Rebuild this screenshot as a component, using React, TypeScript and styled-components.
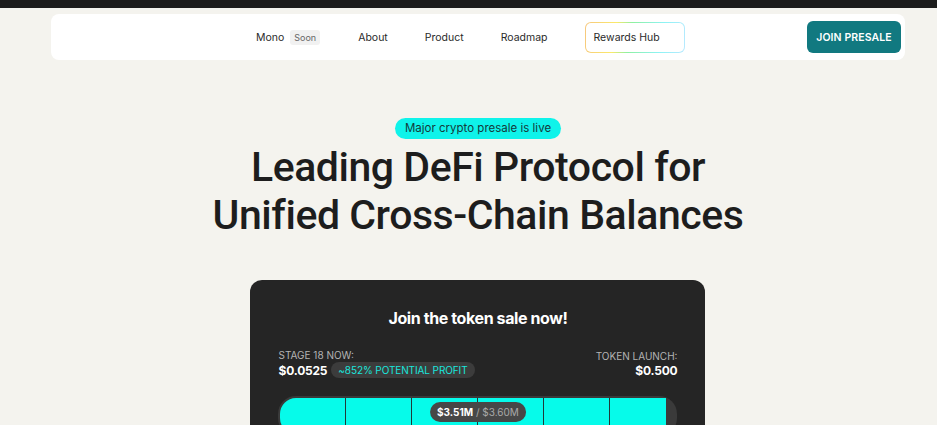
import React from "react";
import styled, { createGlobalStyle } from "styled-components";

const GlobalStyle = createGlobalStyle`
  html, body {
    margin: 0;
    padding: 0;
    background: #f4f3ee;
    font-family: Inter, "Noto Sans", sans-serif;
    color: #1b1b1b;
  }
`;

const TopStrip = styled.div`
  height: 8px;
  background: #1c1c1c;
`;

const Page = styled.div`
  display: flex;
  flex-direction: column;
  align-items: center;
  height: 417px;
  overflow: hidden;
  padding-left: 19px;

  & > * {
    flex-shrink: 0;
  }
`;

const NavCard = styled.nav`
  box-sizing: border-box;
  width: 854px;
  height: 46px;
  margin-top: 6px;
  background: #fff;
  border-radius: 8px;
  display: flex;
  align-items: center;
  padding: 0 4px 0 205px;
`;

const NavLinks = styled.ul`
  display: flex;
  align-items: center;
  list-style: none;
  margin: 0;
  padding: 0;
  flex: 1;
`;

const NavItem = styled.li<{ $gap: number }>`
  display: flex;
  align-items: center;
  gap: 6px;
  font-size: 10.5px;
  color: #2a2a2a;
  margin-right: ${(p) => p.$gap}px;
`;

const Soon = styled.span`
  font-size: 9px;
  color: #666;
  background: #f1f1f1;
  border-radius: 3px;
  padding: 2px 4px;
`;

const RewardsHub = styled.li`
  box-sizing: border-box;
  width: 100px;
  height: 31px;
  border-radius: 6px;
  padding: 1px;
  background: linear-gradient(100deg, #f6c77e 0%, #fbe96a 30%, #8ef0a0 45%, #8cf3f4 75%, #b9e9ff 100%);
  display: flex;

  & > span {
    flex: 1;
    background: #fff;
    border-radius: 5px;
    display: flex;
    align-items: center;
    padding-left: 8px;
    font-size: 10.5px;
    color: #2a2a2a;
  }
`;

const JoinButton = styled.button`
  width: 94px;
  height: 32px;
  border: none;
  border-radius: 6px;
  background: #117980;
  color: #fff;
  font-family: Inter, sans-serif;
  font-size: 10.5px;
  font-weight: 600;
  letter-spacing: 0.1px;
`;

const Hero = styled.section`
  display: flex;
  flex-direction: column;
  align-items: center;
  margin-top: 58px;
`;

const LiveBadge = styled.div`
  background: #0ff3ea;
  border-radius: 11px;
  padding: 3px 10px;
  font-size: 11.5px;
  line-height: 15px;
  color: #143a3a;
`;

const Title = styled.h1`
  margin: 4px 0 0;
  font-family: Roboto, sans-serif;
  font-weight: 500;
  font-size: 41px;
  line-height: 48px;
  letter-spacing: -0.45px;
  text-align: center;
  color: #1d1d1d;
`;

const SaleCard = styled.div`
  box-sizing: border-box;
  width: 455px;
  margin-top: 41px;
  background: #252525;
  border-radius: 12px;
  padding: 28px 28px 0;
  color: #fff;
`;

const SaleTitle = styled.h2`
  margin: 0;
  text-align: center;
  font-size: 16px;
  font-weight: 700;
  letter-spacing: -0.4px;
`;

const PriceRow = styled.div`
  display: flex;
  justify-content: space-between;
  align-items: flex-end;
  margin-top: 21px;
`;

const PriceBlock = styled.div<{ $right?: boolean }>`
  display: flex;
  flex-direction: column;
  align-items: ${(p) => (p.$right ? "flex-end" : "flex-start")};
  gap: 1px;
`;

const PriceLabel = styled.span`
  font-size: 10px;
  color: #b4b4b4;
`;

const PriceLine = styled.div`
  display: flex;
  align-items: center;
  gap: 4px;
`;

const PriceValue = styled.span`
  font-size: 12px;
  font-weight: 700;
  letter-spacing: -0.2px;
`;

const ProfitPill = styled.span`
  background: #3c3c3c;
  color: #19e6dc;
  border-radius: 8px;
  padding: 2px 7px;
  font-size: 10px;
  letter-spacing: -0.1px;
`;

const Track = styled.div`
  position: relative;
  margin-top: 18px;
  height: 36px;
  border-radius: 18px;
  background: #3a3a3a;
  padding: 2px;
`;

const Fill = styled.div`
  height: 100%;
  border-radius: 16px 0 0 16px;
  background: #06fbea;
`;

const Dividers = styled.div`
  position: absolute;
  inset: 2px;
  display: grid;
  grid-template-columns: repeat(6, 1fr);
  pointer-events: none;
`;

const Segment = styled.div`
  border-right: 1px solid #203a38;
  &:last-child {
    border-right: none;
  }
`;

const Raised = styled.div`
  position: absolute;
  left: 50%;
  top: 6px;
  transform: translateX(-50%);
  background: #474747;
  border-radius: 10px;
  padding: 3px 7px;
  font-size: 10px;
  line-height: 14px;
  white-space: nowrap;
  color: #fff;

  & b {
    font-weight: 700;
  }
  & span {
    color: #a9a9a9;
  }
`;

const navItems = [
  { label: "About", gap: 37 },
  { label: "Product", gap: 37 },
  { label: "Roadmap", gap: 37 },
];

export default function App() {
  return (
    <>
      <GlobalStyle />
      <TopStrip />
      <Page>
        <NavCard>
          <NavLinks>
            <NavItem $gap={38}>
              Mono <Soon>Soon</Soon>
            </NavItem>
            {navItems.map((n) => (
              <NavItem key={n.label} $gap={n.gap}>
                {n.label}
              </NavItem>
            ))}
            <RewardsHub>
              <span>Rewards Hub</span>
            </RewardsHub>
          </NavLinks>
          <JoinButton>JOIN PRESALE</JoinButton>
        </NavCard>

        <Hero>
          <LiveBadge>Major crypto presale is live</LiveBadge>
          <Title>
            Leading DeFi Protocol for
            <br />
            Unified Cross-Chain Balances
          </Title>

          <SaleCard>
            <SaleTitle>Join the token sale now!</SaleTitle>
            <PriceRow>
              <PriceBlock>
                <PriceLabel>STAGE 18 NOW:</PriceLabel>
                <PriceLine>
                  <PriceValue>$0.0525</PriceValue>
                  <ProfitPill>~852% POTENTIAL PROFIT</ProfitPill>
                </PriceLine>
              </PriceBlock>
              <PriceBlock $right>
                <PriceLabel>TOKEN LAUNCH:</PriceLabel>
                <PriceValue>$0.500</PriceValue>
              </PriceBlock>
            </PriceRow>
            <Track>
              <Fill style={{ width: `${(3.51 / 3.6) * 100}%` }} />
              <Dividers>
                {Array.from({ length: 6 }).map((_, i) => (
                  <Segment key={i} />
                ))}
              </Dividers>
              <Raised>
                <b>$3.51M</b> <span>/ $3.60M</span>
              </Raised>
            </Track>
          </SaleCard>
        </Hero>
      </Page>
    </>
  );
}
